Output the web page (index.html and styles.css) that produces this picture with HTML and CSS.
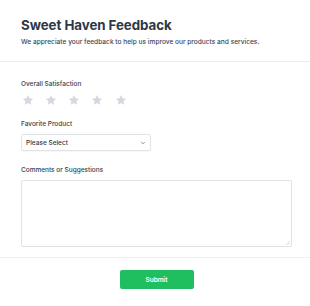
FILE: index.html
```html
<!DOCTYPE html>
<html lang="en">
<head>
<meta charset="utf-8">
<title>Sweet Haven Feedback</title>
<link rel="stylesheet" href="styles.css">
</head>
<body>
<header class="header">
  <h1 class="title">Sweet Haven Feedback</h1>
  <p class="subtitle">We appreciate your feedback to help us improve our products and services.</p>
</header>
<form class="form">
  <div class="field field-rating">
    <span class="label">Overall Satisfaction</span>
    <div class="stars">
      <svg class="star" viewBox="0 0 24 24"><path d="M12 1.8l3.1 6.6 7.2.9-5.3 5 1.4 7.1L12 17.9l-6.4 3.5L7 14.3l-5.3-5 7.2-.9z"/></svg>
      <svg class="star" viewBox="0 0 24 24"><path d="M12 1.8l3.1 6.6 7.2.9-5.3 5 1.4 7.1L12 17.9l-6.4 3.5L7 14.3l-5.3-5 7.2-.9z"/></svg>
      <svg class="star" viewBox="0 0 24 24"><path d="M12 1.8l3.1 6.6 7.2.9-5.3 5 1.4 7.1L12 17.9l-6.4 3.5L7 14.3l-5.3-5 7.2-.9z"/></svg>
      <svg class="star" viewBox="0 0 24 24"><path d="M12 1.8l3.1 6.6 7.2.9-5.3 5 1.4 7.1L12 17.9l-6.4 3.5L7 14.3l-5.3-5 7.2-.9z"/></svg>
      <svg class="star" viewBox="0 0 24 24"><path d="M12 1.8l3.1 6.6 7.2.9-5.3 5 1.4 7.1L12 17.9l-6.4 3.5L7 14.3l-5.3-5 7.2-.9z"/></svg>
    </div>
  </div>
  <div class="field field-product">
    <label class="label" for="product">Favorite Product</label>
    <div class="select-wrap">
      <select id="product" class="select">
        <option>Please Select</option>
      </select>
      <svg class="chevron" viewBox="0 0 10 10"><path d="M2.5 3.8L5 6.3l2.5-2.5" fill="none" stroke="#6b7280" stroke-width="1.3" stroke-linecap="round" stroke-linejoin="round"/></svg>
    </div>
  </div>
  <div class="field field-comments">
    <label class="label" for="comments">Comments or Suggestions</label>
    <div class="textarea-wrap">
      <textarea id="comments" class="textarea"></textarea>
      <svg class="resizer" viewBox="0 0 6 6"><path d="M5.5 1.5L1.5 5.5M5.5 3.5L3.5 5.5" fill="none" stroke="#c4c8ce" stroke-width="0.7"/></svg>
    </div>
  </div>
  <div class="actions">
    <button type="button" class="submit">Submit</button>
  </div>
</form>
</body>
</html>
```
FILE: styles.css
```css
* { box-sizing: border-box; }
html, body { margin: 0; padding: 0; background: #ffffff; }
body {
  font-family: Inter, "Noto Sans", "Liberation Sans", sans-serif;
  color: #2d3748;
  width: 310px;
}
.header {
  padding: 17px 18px 14.5px 21px;
  border-bottom: 1px solid #ebedf0;
}
.title {
  margin: 0;
  font-size: 13.3px;
  line-height: 16px;
  font-weight: 700;
  color: #2d3748;
  letter-spacing: -0.05px;
}
.subtitle {
  margin: 4.5px 0 0;
  font-size: 6.6px;
  line-height: 9px;
  font-weight: 500;
  color: #3c4658;
}
.form {
  display: flex;
  flex-direction: column;
}
.field {
  display: flex;
  flex-direction: column;
  padding: 0 18px 0 21px;
}
.label {
  display: block;
  font-size: 6.5px;
  line-height: 9px;
  font-weight: 500;
  color: #374151;
}
.field-rating { margin-top: 17.5px; gap: 5.5px; }
.stars {
  display: flex;
  gap: 11.3px;
  height: 12px;
  padding-left: 0.5px;
}
.star {
  width: 12px;
  height: 12px;
  fill: #d5d8de;
}
.field-product { margin-top: 13.5px; gap: 5.5px; }
.select-wrap {
  position: relative;
  width: 130px;
  height: 17px;
}
.select {
  display: block;
  appearance: none;
  -webkit-appearance: none;
  width: 100%;
  height: 17px;
  margin: 0;
  padding: 0 0 0 4px;
  border: 1px solid #dfe2e7;
  border-radius: 2px;
  background: #ffffff;
  font-family: inherit;
  font-size: 6.5px;
  font-weight: 500;
  color: #2d3748;
  box-shadow: 0 1px 1px rgba(0,0,0,0.03);
}
.chevron {
  position: absolute;
  right: 5px;
  top: 5.5px;
  width: 6px;
  height: 6px;
  pointer-events: none;
}
.field-comments { margin-top: 15px; gap: 5px; }
.textarea-wrap {
  position: relative;
  width: 271px;
  height: 67px;
}
.textarea {
  display: block;
  width: 100%;
  height: 100%;
  margin: 0;
  border: 1px solid #dfe2e7;
  border-radius: 2px;
  background: #ffffff;
  font-family: inherit;
  font-size: 6.5px;
  resize: none;
}
.resizer {
  position: absolute;
  right: 2px;
  bottom: 2px;
  width: 5px;
  height: 5px;
  pointer-events: none;
}
.actions {
  margin-top: 10px;
  border-top: 1px solid #f0f1f3;
  padding: 12px 18px 0 21px;
  display: flex;
  justify-content: center;
}
.submit {
  width: 74px;
  height: 19px;
  margin: 0;
  border: none;
  border-radius: 2px;
  background: #1fbf5f;
  color: #ffffff;
  font-family: inherit;
  font-size: 6.5px;
  font-weight: 600;
  cursor: pointer;
}
```
